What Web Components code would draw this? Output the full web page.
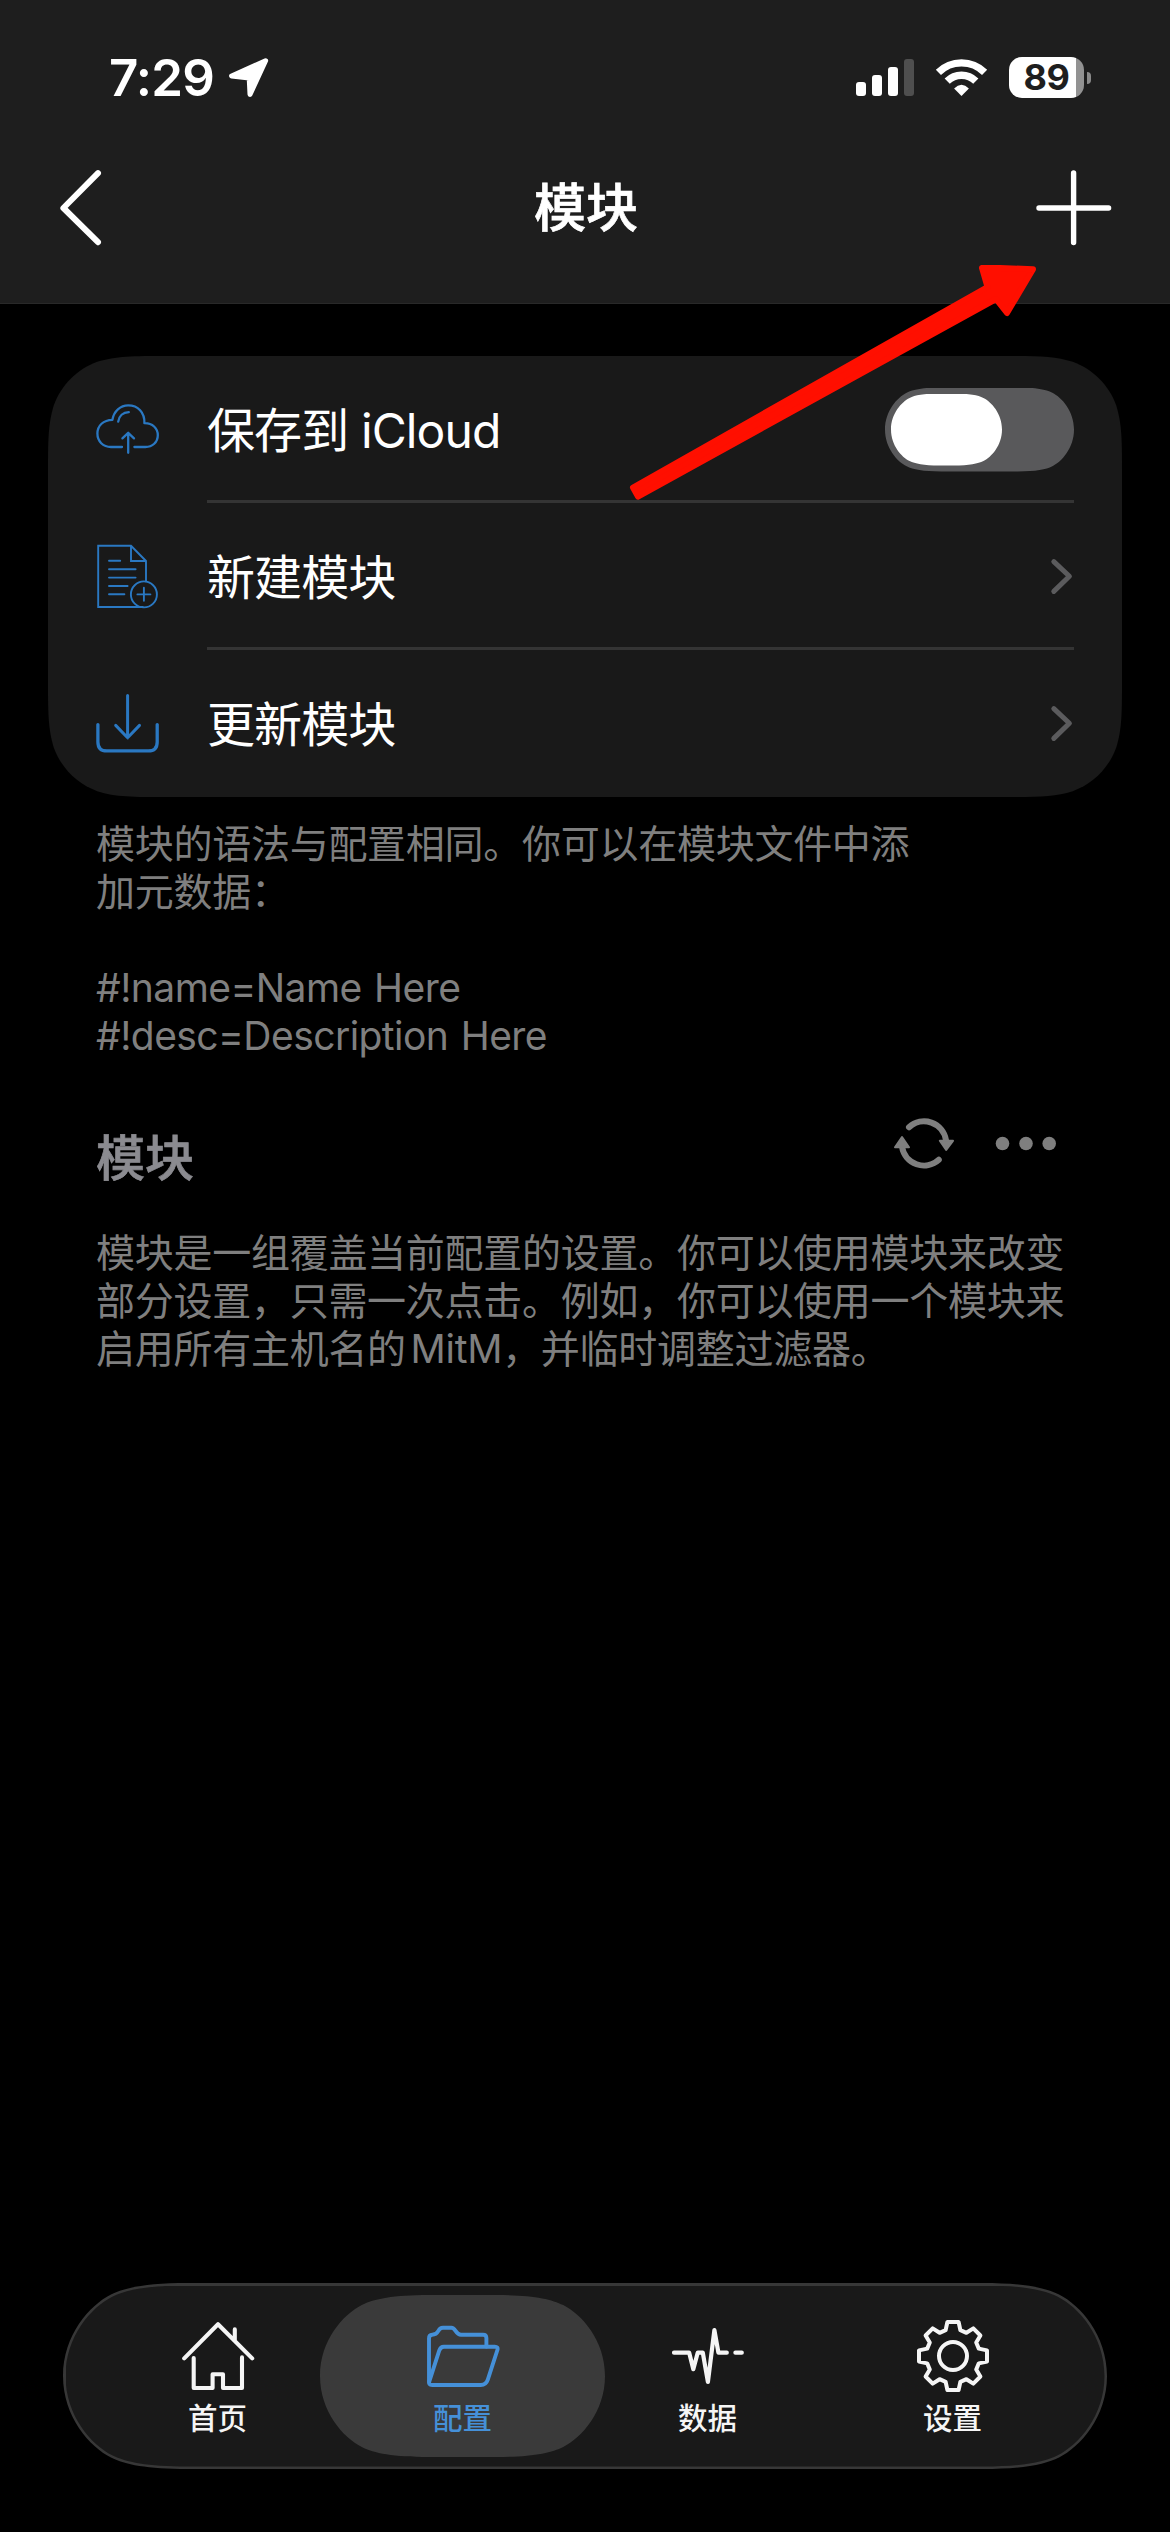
<!DOCTYPE html>
<html lang="zh-CN">
<head>
<meta charset="utf-8">
<title>模块</title>
<style>
html, body { margin: 0; background: #000; }
body { width: 1170px; height: 2532px; overflow: hidden; font-family: Inter, "Noto Sans CJK SC", sans-serif; color: #fff; }
</style>
</head>
<body>
<module-screen></module-screen>
<script>
const define = (tag, html) => customElements.define(tag, class extends HTMLElement {
  constructor() {
    super();
    const t = document.createElement('template');
    t.innerHTML = html;
    this.attachShadow({ mode: 'open' }).appendChild(t.content.cloneNode(true));
  }
});

/* Continuous-corner outlines. A corner is a list of points running from the
   vertical edge to the horizontal edge, measured from the corner itself. */
const CAPSULE = [[0, 1], [0, .559], [.290, .237], [.516, .124], [.667, .048], [.903, 0], [1.344, 0]];
const ROUNDED = [[0, 1.5287], [0, 1.0885], [0, .8684], [.0749, .6315], [.1691, .3728], [.3728, .1691], [.6315, .0749], [.8684, 0], [1.0885, 0], [1.5287, 0]];
function outline(w, h, r, corner) {
  const c = corner.map(([x, y]) => [x * r, y * r]);
  const rev = [...c].reverse();
  const quads = [c, rev.map(([x, y]) => [w - x, y]), c.map(([x, y]) => [w - x, h - y]), rev.map(([x, y]) => [x, h - y])];
  const d = quads.map((q, i) => `${i ? 'L' : 'M'}${q[0].map(n => n.toFixed(2)).join(' ')}C${q.slice(1).map(p => p.map(n => n.toFixed(2)).join(' ')).join(' ')}`).join('');
  return `clip-path:path('${d}Z')`;
}
const capsule = (w, h) => outline(w, h, h / 2, CAPSULE);

/* Each icon: [viewBox, width, height, stroke width, markup] */
const ICONS = {
  location: ['227 57 44 44', 44, 44, 5, '<path fill="currentColor" d="M265.6 61.8 231.6 77 249.2 78.9 250 95.5z"/>'],
  signal: ['856 57 60 41', 60, 41, 0, '<g fill="currentColor"><rect x="856" y="82" width="10" height="14" rx="3"/><rect x="872" y="75" width="10" height="21" rx="3"/><rect x="888" y="67" width="10" height="29" rx="3"/><rect x="904" y="59" width="10" height="37" rx="3" opacity=".22"/></g>'],
  wifi: ['935 57 53 41', 53, 41, 7.3, '<g stroke-linecap="butt"><path d="M938.4 72.4a32.7 32.7 0 0 1 46.2 0M947.2 81.2a20.2 20.2 0 0 1 28.6 0"/></g><path stroke="none" fill="currentColor" d="M961.5 96l-7.4-7.6q7.4-7.2 14.8 0z"/>'],
  back: ['58 168 46 80', 46, 80, 6, '<path d="M98 173.2 63.4 208 98 242.2"/>'],
  plus: ['1034 168 80 80', 80, 80, 5.4, '<path d="M1039 208h69.6M1073.6 173v69.6"/>'],
  cloud: ['97 403 64 53', 64, 53, 2.3, '<path d="M123 447h-11c-8 0-13.6-5.6-13.6-13.4 0-8 6-13.6 15-13.8 1.4-8.6 8-14.4 15.8-14.4 9.8 0 16.6 7 16.2 17.8 8-.2 13.4 5 13.4 12 0 7-5.400 11.800-12.400 11.800h-11"/><path d="M119.200 421.600c.8-5.400 4.800-9.200 10.600-9.400M129.200 452.800v-19.600M123.400 438.400l5.800-5.600 5.800 5.600"/>'],
  doc: ['97 544 63 66', 63, 66, 1.9, '<path stroke-linejoin="miter" d="M143.800 607H99.200v-61.200h32.800l15 15.200v20.400M132 545.800V561h15"/><path d="M110 560.800h11.200M110 569.300h26.600M110 577.600h26.600M110 586h18.600M110 594.200h15.400M138.400 594.400h13M144.900 587.800v13"/><circle cx="144.900" cy="594.400" r="13"/>'],
  download: ['97 693 64 62', 64, 62, 3, '<path stroke-width="3.300" d="M98.900 724.600v17.300q0 9 9 9h41.300q9 0 9-9v-17.300"/><path d="M128.600 695.600v42M116.700 725.400l11.900 12.400 11.900-12.400"/>'],
  chevron: ['1049 556 25 41', 25, 41, 5, '<path d="M1053.800 561.600 1069.400 576.300 1053.800 591.400"/>'],
  refresh: ['893 1116 63 56', 63, 56, 6, '<path d="M909 1127.200a22.200 22.200 0 0 1 37 13M938.800 1159.800a22.200 22.200 0 0 1-36.800-13"/><path stroke-width="2" fill="currentColor" d="M939.800 1140.800h13.200l-6.800 9.200zM895 1147.200h14l-7-10.200z"/>'],
  dots: ['995 1136 62 16', 62, 16, 0, '<g fill="currentColor"><circle cx="1002.500" cy="1143.500" r="6.800"/><circle cx="1026" cy="1143.500" r="6.800"/><circle cx="1049.200" cy="1143.500" r="6.800"/></g>'],
  home: ['180 2319 74 74', 74, 74, 4.1, '<path d="M183.200 2358.400 217 2324.200 251.200 2358.400M233.800 2329.400v11.400M192.700 2358v30h18.900v-13.700h10.400v13.700h19v-30.600"/>'],
  folder: ['425 2319 74 74', 74, 74, 3.900, '<path d="M428 2382v-43.500q0-3.700 3.200-3.800c7.600 0 4.800-7 10.600-7h8.600c4.400 0 4 7 9.600 7h22q3.400 0 3.400 3.400v8.400"/><path d="M442.800 2346.700h51q3.600 0 2.600 3.300l-9.600 29.600q-1.800 5.400-7 5.400h-48.600q-4 0-2.800-3.900l9.800-30.400q1.300-4 4.600-4z"/>'],
  pulse: ['670 2319 74 74', 74, 74, 4.200, '<path d="M673 2352.700h15.200l4.100 16.500 4.400-16.500h5.100l5.100 29.300 6.500-52 4 22.700h8.400M734.400 2352.700h6.400"/>'],
  gear: ['-37 -37 74 74', 74, 74, 4, '<circle r="14" cy="0"/><path d="M-5.600-34H5.600L7.400-25.800 13.400-23.200 20.300-27.600 27.400-20.500 23.200-13.500 25.800-7.400 34-5.600V5.600L25.800 7.400 23.200 13.500 27.400 20.500 20.300 27.600 13.400 23.200 7.400 25.800 5.600 34H-5.600L-7.400 25.800-13.400 23.200-20.300 27.600-27.400 20.500-23.200 13.500-25.800 7.400-34 5.600V-5.600L-25.800-7.400-23.200-13.500-27.400-20.500-20.300-27.600-13.400-23.200-7.400-25.800z"/>']
};
customElements.define('app-icon', class extends HTMLElement {
  constructor() { super(); this.attachShadow({ mode: 'open' }); }
  connectedCallback() {
    const [box, w, h, sw, body] = ICONS[this.getAttribute('name')];
    this.shadowRoot.innerHTML = `<style>:host{display:block;flex:none}:host([name=chevron]){color:#5b5b5d}svg{display:block}</style>
      <svg width="${w}" height="${h}" viewBox="${box}" fill="none" stroke="${sw ? 'currentColor' : 'none'}" stroke-width="${sw}" stroke-linecap="round" stroke-linejoin="round">${body}</svg>`;
  }
});

define('battery-level', `<style>
:host{display:flex;align-items:center;gap:3px;margin-left:21px}
.cell{width:75px;height:41px;border-radius:13px;background:linear-gradient(90deg,#fff 67px,#929292 67px);color:#1e1e1e;display:flex;align-items:center;justify-content:center;font:700 36px/41px Inter,sans-serif;letter-spacing:-.5px}
.nub{width:4px;height:12px;border-radius:0 4px 4px 0;background:#8a8a8a}
</style><div class="cell"><slot></slot></div><div class="nub"></div>`);

define('status-bar', `<style>
:host{display:flex;align-items:center;height:41px;padding:57px 79px 0 109px}
.time{font:600 51px/41px Inter,sans-serif;letter-spacing:-.8px;width:118px;white-space:nowrap}
.right{display:flex;align-items:center;margin-left:auto}
.wifi{margin-left:19px}
</style><div class="time">7:29</div><app-icon name="location"></app-icon>
<div class="right"><app-icon name="signal"></app-icon><app-icon class="wifi" name="wifi"></app-icon><battery-level>89</battery-level></div>`);

define('nav-bar', `<style>
:host{display:grid;grid-template-columns:1fr auto 1fr;align-items:center;height:80px;padding:70px 56px 56px 58px}
h1{margin:0 0 7px;font:500 52px/73px "Noto Sans CJK SC",sans-serif;-webkit-text-stroke:.7px currentColor}
.end{justify-self:end}
</style><app-icon name="back"></app-icon><h1><slot></slot></h1><app-icon class="end" name="plus"></app-icon>`);

define('toggle-switch', `<style>
:host{display:flex;align-items:center;box-sizing:border-box;width:189px;height:84px;padding:0 6px;background:#59595b;${capsule(189, 84)}}
i{width:111px;height:72px;background:#fff;${capsule(111, 72)}}
</style><i></i>`);

define('settings-row', `<style>
:host{display:flex;height:147px;align-items:stretch}
.icon{width:111px;display:flex;align-items:center;color:#2a78c2}
.body{flex:1;display:flex;align-items:center;justify-content:space-between;box-sizing:border-box;border-bottom:3px solid #343434;padding-top:3px}
:host([last]) .body{border-color:transparent}
.label{font-size:48px;line-height:60px;letter-spacing:-.9px;white-space:nowrap;padding-top:3px}
</style><div class="icon"><slot name="icon"></slot></div><div class="body"><div class="label"><slot></slot></div><slot name="end"></slot></div>`);

define('settings-card', `<style>
:host{display:block;margin:52px 48px 0;height:441px;box-sizing:border-box;padding:0 48px;background:#191919;color:#fff;${outline(1074, 441, 78, ROUNDED)}}
</style><slot></slot>`);

define('foot-note', `<style>
:host{display:block;margin:0 96px;font-size:39px;line-height:48px;letter-spacing:-.27px;color:#7f7f7f;white-space:nowrap}
::slotted(.code){letter-spacing:-.55px;word-spacing:2px}
::slotted(.term){word-spacing:-6px}
</style><slot></slot>`);

define('section-head', `<style>
:host{display:flex;justify-content:space-between;margin:0 113px 0 96px;height:76px;color:#7f7f7f}
h2{margin:14px 0 0;font:500 49px/50px "Noto Sans CJK SC",sans-serif;color:#8b8b90;-webkit-text-stroke:.7px currentColor}
.tools{display:flex;align-items:center;gap:39px;height:56px}
</style><h2><slot></slot></h2><div class="tools"><app-icon name="refresh"></app-icon><app-icon name="dots"></app-icon></div>`);

define('tab-item', `<style>
:host{display:flex;justify-content:center;width:245px;color:#f5f5f5}
.pill{flex:none;box-sizing:border-box;width:285px;height:162px;padding-top:24px;display:flex;flex-direction:column;align-items:center}
:host([selected]) .pill{background:#3a3a3a;color:#4590d8;${capsule(285, 162)}}
.label{margin-top:2px;font:500 29.500px/42px "Noto Sans CJK SC",sans-serif}
</style><div class="pill"><slot name="icon"></slot><div class="label"><slot></slot></div></div>`);

define('tab-bar', `<style>
:host{display:block;box-sizing:border-box;width:1044px;height:186px;padding:2.500px;margin:auto auto 63px;background:#373737;${capsule(1044, 186)}}
.inner{display:flex;align-items:center;justify-content:center;height:181px;background:#191919;${capsule(1039, 181)}}
</style><div class="inner"><slot></slot></div>`);

/* Annotation arrow laid over the content, pointing at the add button */
define('pointer-arrow', `<style>
:host{position:absolute;left:620px;top:255px;width:430px;height:260px;pointer-events:none}
svg{display:block}
</style><svg width="430" height="260" viewBox="620 255 430 260"><path fill="#ff0f00" stroke="#ff0f00" stroke-width="6" stroke-linejoin="round" d="M633 487.500 987.500 287 982 268H1000L1033 269.200 1007 313 996 299 638 496.500z"/></svg>`);

define('module-screen', `<style>
:host{position:relative;display:flex;flex-direction:column;width:1170px;height:2532px;background:#000}
header{background:#1e1e1e;height:303px;border-bottom:1px solid #292929;flex:none}
.n1{margin-top:23px}
.sp{height:56px;flex:none}
.n2{margin-top:37px}
</style>
<header><status-bar></status-bar><nav-bar>模块</nav-bar></header>
<settings-card>
<settings-row><app-icon slot="icon" name="cloud"></app-icon>保存到 iCloud<toggle-switch slot="end"></toggle-switch></settings-row>
<settings-row><app-icon slot="icon" name="doc"></app-icon>新建模块<app-icon slot="end" name="chevron"></app-icon></settings-row>
<settings-row last><app-icon slot="icon" name="download"></app-icon>更新模块<app-icon slot="end" name="chevron"></app-icon></settings-row>
</settings-card>
<foot-note class="n1">模块的语法与配置相同。你可以在模块文件中添<br>加元数据：<br><br><span class="code">#!name=Name Here</span><br><span class="code">#!desc=Description Here</span></foot-note>
<div class="sp"></div>
<section-head>模块</section-head>
<foot-note class="n2">模块是一组覆盖当前配置的设置。你可以使用模块来改变<br>部分设置，只需一次点击。例如，你可以使用一个模块来<br>启用所有主机名的<span class="term"> MitM</span>，并临时调整过滤器。</foot-note>
<tab-bar>
<tab-item><app-icon slot="icon" name="home"></app-icon>首页</tab-item>
<tab-item selected><app-icon slot="icon" name="folder"></app-icon>配置</tab-item>
<tab-item><app-icon slot="icon" name="pulse"></app-icon>数据</tab-item>
<tab-item><app-icon slot="icon" name="gear"></app-icon>设置</tab-item>
</tab-bar>
<pointer-arrow></pointer-arrow>`);
</script>
</body>
</html>
